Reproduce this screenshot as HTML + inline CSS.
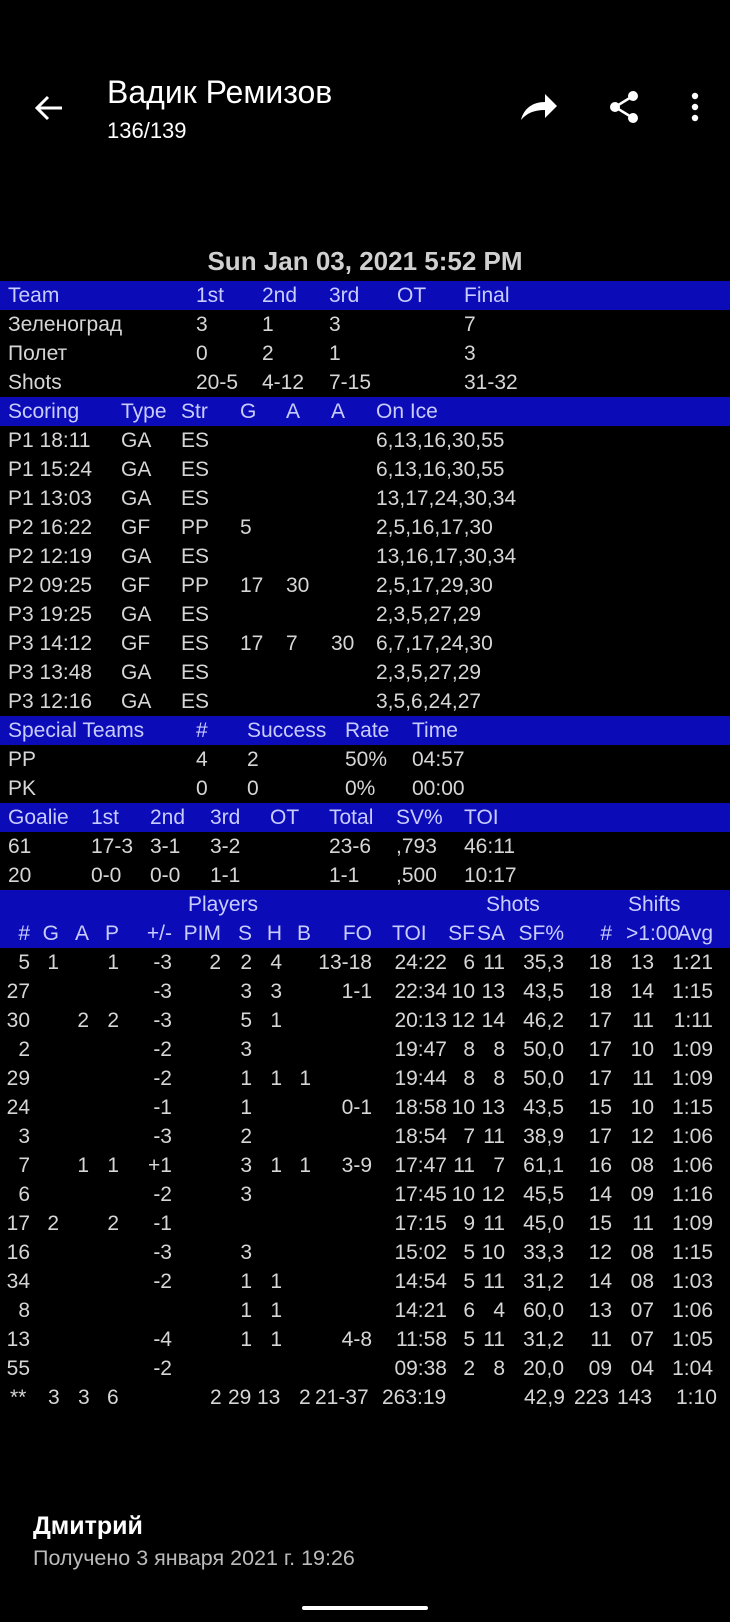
<!DOCTYPE html>
<html><head><meta charset="utf-8">
<style>
*{margin:0;padding:0;box-sizing:border-box}
body{width:730px;height:1622px;background:#000;position:relative;overflow:hidden;font-family:"Liberation Sans","Noto Sans CJK SC",sans-serif;color:#d6d6d6;font-size:21px}
.a{position:absolute;white-space:nowrap}
#t{position:absolute;left:0;top:281px;width:730px}
.r{height:29px;line-height:29px;position:relative;white-space:nowrap}
.b{background:#0b0bb8;color:#c8ccff}
.r span{position:absolute;top:0}
.g{display:flex}
.g span{position:static!important;text-align:right;display:block;flex:none}
.g span:nth-child(1){width:30px}.g span:nth-child(2){width:29px}.g span:nth-child(3){width:30px}.g span:nth-child(4){width:30px}
.g span:nth-child(5){width:53px}.g span:nth-child(6){width:49px}.g span:nth-child(7){width:31px}.g span:nth-child(8){width:30px}
.g span:nth-child(9){width:29px}.g span:nth-child(10){width:61px}.g span:nth-child(11){width:75px}.g span:nth-child(12){width:28px}
.g span:nth-child(13){width:30px}.g span:nth-child(14){width:59px}.g span:nth-child(15){width:48px}.g span:nth-child(16){width:42px}
.g span:nth-child(17){width:59px}
</style></head><body>

<svg class="a" style="left:34px;top:94px" width="30" height="28" viewBox="0 0 30 28"><path d="M28 14H4M14 3L3 14l11 11" stroke="#fff" stroke-width="3" fill="none"/></svg>
<div class="a" style="left:107px;top:74px;font-size:32px;color:#fff">Вадик Ремизов</div>
<div class="a" style="left:107px;top:118px;font-size:22px;color:#fff">136/139</div>
<svg class="a" style="left:519px;top:92px" width="40" height="30" viewBox="0 0 40 30"><path d="M2 28C5 16 14 10 26 10V2l12 12-12 12v-8C15 18 8 21 2 28z" fill="#fff"/></svg>
<svg class="a" style="left:608px;top:90px" width="32" height="34" viewBox="0 0 32 34"><circle cx="25" cy="6" r="5" fill="#fff"/><circle cx="7" cy="17" r="5" fill="#fff"/><circle cx="25" cy="28" r="5" fill="#fff"/><path d="M25 6L7 17l18 11" stroke="#fff" stroke-width="2.5" fill="none"/></svg>
<svg class="a" style="left:689px;top:92px" width="12" height="32" viewBox="0 0 12 32"><circle cx="6" cy="4" r="3.2" fill="#fff"/><circle cx="6" cy="15" r="3.2" fill="#fff"/><circle cx="6" cy="26" r="3.2" fill="#fff"/></svg>

<div class="a" style="left:0;width:730px;text-align:center;top:246px;font-size:26px;font-weight:bold;color:#d0d0d0">Sun Jan 03, 2021 5:52 PM</div>

<div id="t">
<div class="r b"><span style="left:8px">Team</span><span style="left:196px">1st</span><span style="left:262px">2nd</span><span style="left:329px">3rd</span><span style="left:397px">OT</span><span style="left:464px">Final</span></div>
<div class="r"><span style="left:8px">Зеленоград</span><span style="left:196px">3</span><span style="left:262px">1</span><span style="left:329px">3</span><span style="left:464px">7</span></div>
<div class="r"><span style="left:8px">Полет</span><span style="left:196px">0</span><span style="left:262px">2</span><span style="left:329px">1</span><span style="left:464px">3</span></div>
<div class="r"><span style="left:8px">Shots</span><span style="left:196px">20-5</span><span style="left:262px">4-12</span><span style="left:329px">7-15</span><span style="left:464px">31-32</span></div>
<div class="r b"><span style="left:8px">Scoring</span><span style="left:121px">Type</span><span style="left:181px">Str</span><span style="left:240px">G</span><span style="left:286px">A</span><span style="left:331px">A</span><span style="left:376px">On Ice</span></div>
<div class="r"><span style="left:8px">P1 18:11</span><span style="left:121px">GA</span><span style="left:181px">ES</span><span style="left:376px">6,13,16,30,55</span></div>
<div class="r"><span style="left:8px">P1 15:24</span><span style="left:121px">GA</span><span style="left:181px">ES</span><span style="left:376px">6,13,16,30,55</span></div>
<div class="r"><span style="left:8px">P1 13:03</span><span style="left:121px">GA</span><span style="left:181px">ES</span><span style="left:376px">13,17,24,30,34</span></div>
<div class="r"><span style="left:8px">P2 16:22</span><span style="left:121px">GF</span><span style="left:181px">PP</span><span style="left:240px">5</span><span style="left:376px">2,5,16,17,30</span></div>
<div class="r"><span style="left:8px">P2 12:19</span><span style="left:121px">GA</span><span style="left:181px">ES</span><span style="left:376px">13,16,17,30,34</span></div>
<div class="r"><span style="left:8px">P2 09:25</span><span style="left:121px">GF</span><span style="left:181px">PP</span><span style="left:240px">17</span><span style="left:286px">30</span><span style="left:376px">2,5,17,29,30</span></div>
<div class="r"><span style="left:8px">P3 19:25</span><span style="left:121px">GA</span><span style="left:181px">ES</span><span style="left:376px">2,3,5,27,29</span></div>
<div class="r"><span style="left:8px">P3 14:12</span><span style="left:121px">GF</span><span style="left:181px">ES</span><span style="left:240px">17</span><span style="left:286px">7</span><span style="left:331px">30</span><span style="left:376px">6,7,17,24,30</span></div>
<div class="r"><span style="left:8px">P3 13:48</span><span style="left:121px">GA</span><span style="left:181px">ES</span><span style="left:376px">2,3,5,27,29</span></div>
<div class="r"><span style="left:8px">P3 12:16</span><span style="left:121px">GA</span><span style="left:181px">ES</span><span style="left:376px">3,5,6,24,27</span></div>
<div class="r b"><span style="left:8px">Special Teams</span><span style="left:196px">#</span><span style="left:247px">Success</span><span style="left:345px">Rate</span><span style="left:412px">Time</span></div>
<div class="r"><span style="left:8px">PP</span><span style="left:196px">4</span><span style="left:247px">2</span><span style="left:345px">50%</span><span style="left:412px">04:57</span></div>
<div class="r"><span style="left:8px">PK</span><span style="left:196px">0</span><span style="left:247px">0</span><span style="left:345px">0%</span><span style="left:412px">00:00</span></div>
<div class="r b"><span style="left:8px">Goalie</span><span style="left:91px">1st</span><span style="left:150px">2nd</span><span style="left:210px">3rd</span><span style="left:270px">OT</span><span style="left:329px">Total</span><span style="left:396px">SV%</span><span style="left:464px">TOI</span></div>
<div class="r"><span style="left:8px">61</span><span style="left:91px">17-3</span><span style="left:150px">3-1</span><span style="left:210px">3-2</span><span style="left:329px">23-6</span><span style="left:396px">,793</span><span style="left:464px">46:11</span></div>
<div class="r"><span style="left:8px">20</span><span style="left:91px">0-0</span><span style="left:150px">0-0</span><span style="left:210px">1-1</span><span style="left:329px">1-1</span><span style="left:396px">,500</span><span style="left:464px">10:17</span></div>
<div class="r b"><span style="left:188px">Players</span><span style="left:486px">Shots</span><span style="left:628px">Shifts</span></div>
<div class="r b g"><span>#</span><span>G</span><span>A</span><span>P</span><span>+/-</span><span>PIM</span><span>S</span><span>H</span><span>B</span><span>FO</span><span style="text-align:left;padding-left:20px">TOI</span><span>SF</span><span>SA</span><span>SF%</span><span>#</span><span style="position:relative!important;left:14px">&gt;1:00</span><span>Avg</span></div>
<div class="r g"><span>5</span><span>1</span><span></span><span>1</span><span>-3</span><span>2</span><span>2</span><span>4</span><span></span><span>13-18</span><span>24:22</span><span>6</span><span>11</span><span>35,3</span><span>18</span><span>13</span><span>1:21</span></div>
<div class="r g"><span>27</span><span></span><span></span><span></span><span>-3</span><span></span><span>3</span><span>3</span><span></span><span>1-1</span><span>22:34</span><span>10</span><span>13</span><span>43,5</span><span>18</span><span>14</span><span>1:15</span></div>
<div class="r g"><span>30</span><span></span><span>2</span><span>2</span><span>-3</span><span></span><span>5</span><span>1</span><span></span><span></span><span>20:13</span><span>12</span><span>14</span><span>46,2</span><span>17</span><span>11</span><span>1:11</span></div>
<div class="r g"><span>2</span><span></span><span></span><span></span><span>-2</span><span></span><span>3</span><span></span><span></span><span></span><span>19:47</span><span>8</span><span>8</span><span>50,0</span><span>17</span><span>10</span><span>1:09</span></div>
<div class="r g"><span>29</span><span></span><span></span><span></span><span>-2</span><span></span><span>1</span><span>1</span><span>1</span><span></span><span>19:44</span><span>8</span><span>8</span><span>50,0</span><span>17</span><span>11</span><span>1:09</span></div>
<div class="r g"><span>24</span><span></span><span></span><span></span><span>-1</span><span></span><span>1</span><span></span><span></span><span>0-1</span><span>18:58</span><span>10</span><span>13</span><span>43,5</span><span>15</span><span>10</span><span>1:15</span></div>
<div class="r g"><span>3</span><span></span><span></span><span></span><span>-3</span><span></span><span>2</span><span></span><span></span><span></span><span>18:54</span><span>7</span><span>11</span><span>38,9</span><span>17</span><span>12</span><span>1:06</span></div>
<div class="r g"><span>7</span><span></span><span>1</span><span>1</span><span>+1</span><span></span><span>3</span><span>1</span><span>1</span><span>3-9</span><span>17:47</span><span>11</span><span>7</span><span>61,1</span><span>16</span><span>08</span><span>1:06</span></div>
<div class="r g"><span>6</span><span></span><span></span><span></span><span>-2</span><span></span><span>3</span><span></span><span></span><span></span><span>17:45</span><span>10</span><span>12</span><span>45,5</span><span>14</span><span>09</span><span>1:16</span></div>
<div class="r g"><span>17</span><span>2</span><span></span><span>2</span><span>-1</span><span></span><span></span><span></span><span></span><span></span><span>17:15</span><span>9</span><span>11</span><span>45,0</span><span>15</span><span>11</span><span>1:09</span></div>
<div class="r g"><span>16</span><span></span><span></span><span></span><span>-3</span><span></span><span>3</span><span></span><span></span><span></span><span>15:02</span><span>5</span><span>10</span><span>33,3</span><span>12</span><span>08</span><span>1:15</span></div>
<div class="r g"><span>34</span><span></span><span></span><span></span><span>-2</span><span></span><span>1</span><span>1</span><span></span><span></span><span>14:54</span><span>5</span><span>11</span><span>31,2</span><span>14</span><span>08</span><span>1:03</span></div>
<div class="r g"><span>8</span><span></span><span></span><span></span><span></span><span></span><span>1</span><span>1</span><span></span><span></span><span>14:21</span><span>6</span><span>4</span><span>60,0</span><span>13</span><span>07</span><span>1:06</span></div>
<div class="r g"><span>13</span><span></span><span></span><span></span><span>-4</span><span></span><span>1</span><span>1</span><span></span><span>4-8</span><span>11:58</span><span>5</span><span>11</span><span>31,2</span><span>11</span><span>07</span><span>1:05</span></div>
<div class="r g"><span>55</span><span></span><span></span><span></span><span>-2</span><span></span><span></span><span></span><span></span><span></span><span>09:38</span><span>2</span><span>8</span><span>20,0</span><span>09</span><span>04</span><span>1:04</span></div>
<div class="r"><span style="left:10px">**</span><span style="left:48px">3</span><span style="left:78px">3</span><span style="left:107px">6</span><span style="left:210px">2</span><span style="left:228px">29</span><span style="left:257px">13</span><span style="left:299px">2</span><span style="left:315px">21-37</span><span style="left:382px">263:19</span><span style="left:524px">42,9</span><span style="left:574px">223</span><span style="left:617px">143</span><span style="left:676px">1:10</span></div>
</div>

<div class="a" style="left:33px;top:1512px;font-size:25px;font-weight:bold;color:#fff">Дмитрий</div>
<div class="a" style="left:33px;top:1546px;font-size:21.5px;color:#bbb">Получено 3 января 2021 г. 19:26</div>
<div class="a" style="left:302px;top:1606px;width:126px;height:4px;border-radius:2px;background:#fff"></div>
</body></html>
